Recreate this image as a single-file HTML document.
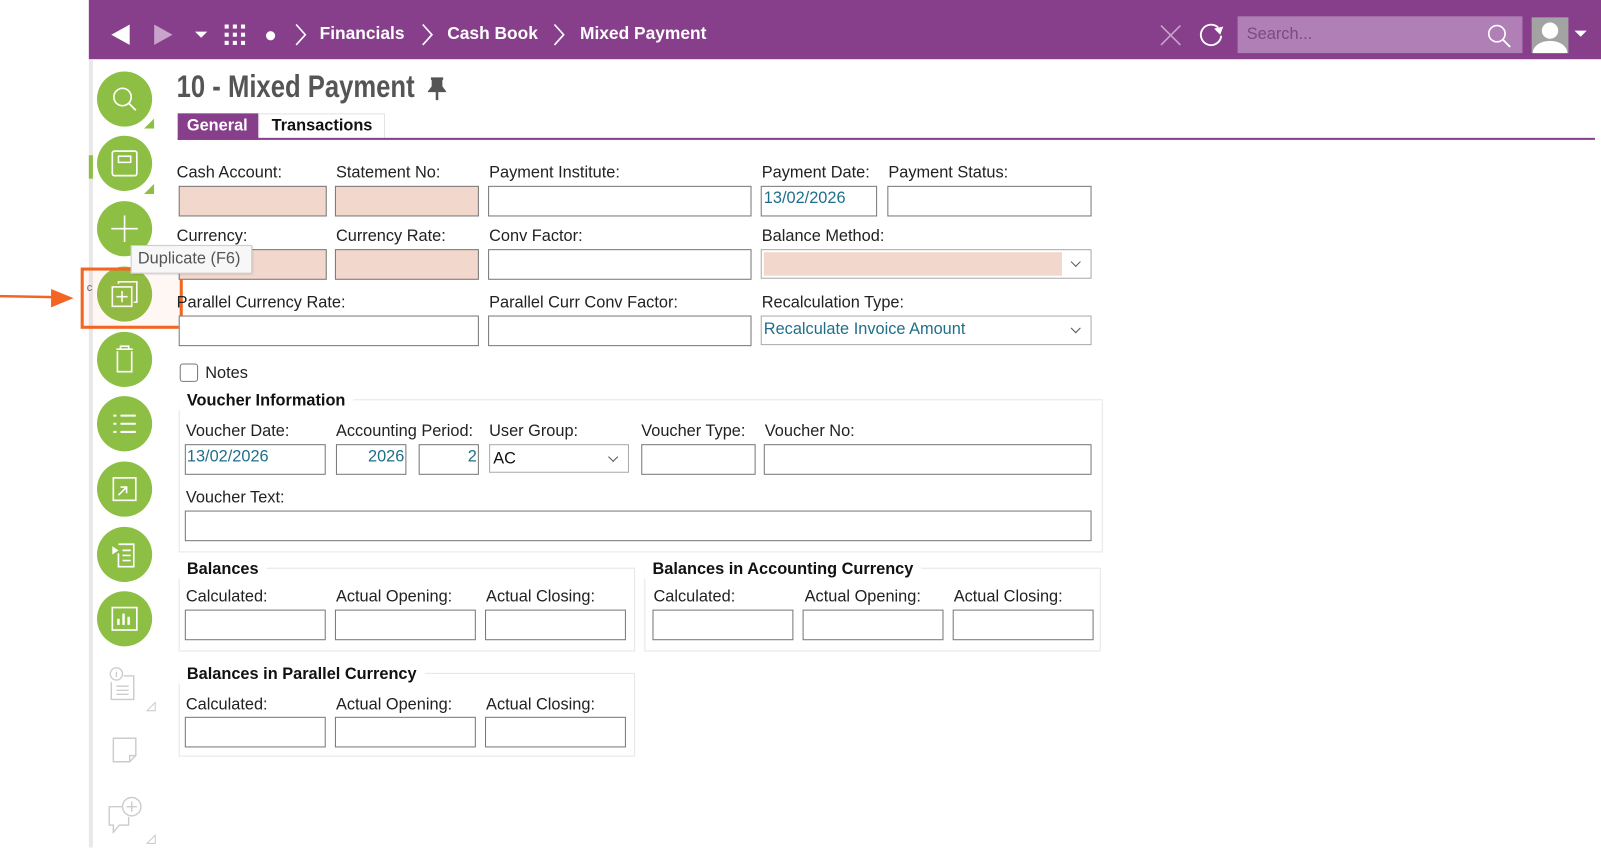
<!DOCTYPE html>
<html><head><meta charset="utf-8"><style>
*{box-sizing:border-box;margin:0;padding:0}
html,body{width:1601px;height:847px;overflow:hidden;background:#fff}
#w{position:absolute;left:0;top:0;width:1568px;height:830px;transform:scale(1.0211);transform-origin:0 0;font-family:"Liberation Sans",Arial,sans-serif;color:#222}
.a{position:absolute}
.hdr{left:87px;top:0;width:1481px;height:58px;background:#873f8c}
.bc{color:#fff;font-weight:bold;font-size:17px;top:23px}
.lbl{position:absolute;font-size:16px;color:#222;white-space:nowrap}
.in{position:absolute;border:1px solid #777;background:#fff;height:30px}
.pk{background:#f2d7cc}
.val{position:absolute;font-size:16px;color:#1f6f8b;top:5px;left:3px}
.sel{position:absolute;border:1px solid #aaa;background:#fff;height:29px}
.sel:after{content:"";position:absolute;right:11px;top:8px;width:6px;height:6px;border-right:1px solid #555;border-bottom:1px solid #555;transform:rotate(45deg)}
.fs{position:absolute;border:1px solid #e6e6e6}
.lg{position:absolute;font-weight:bold;font-size:16px;background:#fff;padding:0 8px 0 8px;color:#111}
.g{position:absolute;left:95px;width:54px;height:54px;border-radius:50%;background:#8dbf44}
.g svg{position:absolute;left:12px;top:12px}
</style></head><body><div id="w">
<div class="a hdr"></div>
<div class="a" style="left:87px;top:58px;width:4px;height:772px;background:#e8e8e8"></div>
<div class="a" style="left:87px;top:152px;width:4px;height:23px;background:#8dbf44"></div>
<svg class="a" style="left:100px;top:20px" width="620" height="30">
<polygon points="9,14 27,4 27,24" fill="#fff"/>
<polygon points="51,4 69,14 51,24" fill="#c9a3cc"/>
<polygon points="91,11 103,11 97,17" fill="#fff"/>
<g fill="#fff"><rect x="120" y="4" width="4" height="4"/><rect x="128" y="4" width="4" height="4"/><rect x="136" y="4" width="4" height="4"/><rect x="120" y="12" width="4" height="4"/><rect x="128" y="12" width="4" height="4"/><rect x="136" y="12" width="4" height="4"/><rect x="120" y="20" width="4" height="4"/><rect x="128" y="20" width="4" height="4"/><rect x="136" y="20" width="4" height="4"/></g>
<circle cx="165" cy="15" r="4.5" fill="#fff"/>
<g stroke="#fff" stroke-width="1.6" fill="none"><polyline points="190,4 199,14 190,24"/><polyline points="314,4 323,14 314,24"/><polyline points="443,4 452,14 443,24"/></g>
</svg>
<div class="a bc" style="left:313px">Financials</div>
<div class="a bc" style="left:438px">Cash Book</div>
<div class="a bc" style="left:568px">Mixed Payment</div>
<svg class="a" style="left:1134px;top:22px" width="26" height="26"><path d="M3,3 L22,22 M22,3 L3,22" stroke="#c9a3cc" stroke-width="1.6"/></svg>
<svg class="a" style="left:1173px;top:21px" width="28" height="28"><path d="M20,6 A10,10 0 1 0 23,14" stroke="#fff" stroke-width="1.8" fill="none"/><polygon points="16,7 25,5 22,13" fill="#fff"/></svg>
<div class="a" style="left:1212px;top:16px;width:279px;height:36px;background:#b07fb5"></div>
<div class="a" style="left:1221px;top:25px;font-size:16px;color:#7c4a80">Search...</div>
<svg class="a" style="left:1455px;top:22px" width="28" height="28"><circle cx="11" cy="11" r="8" stroke="#fff" stroke-width="1.6" fill="none"/><path d="M17,17 L24,24" stroke="#fff" stroke-width="1.8"/></svg>
<div class="a" style="left:1500px;top:17px;width:36px;height:35px;background:#a3a3a3;overflow:hidden"><div class="a" style="left:10px;top:5px;width:16px;height:16px;border-radius:50%;background:#fff"></div><div class="a" style="left:1px;top:23px;width:34px;height:24px;border-radius:50%;background:#fff"></div></div>
<svg class="a" style="left:1541px;top:28px" width="14" height="10"><polygon points="1,2 13,2 7,8" fill="#fff"/></svg>

<!-- left toolbar -->
<div class="g" style="top:70px"><svg width="30" height="30"><circle cx="13" cy="13" r="8.5" stroke="#fff" stroke-width="1.6" fill="none"/><path d="M19,19 L26,26" stroke="#fff" stroke-width="1.8"/></svg></div>
<div class="g" style="top:133px"><svg width="30" height="30"><rect x="3" y="3" width="24" height="24" rx="2" stroke="#fff" stroke-width="1.6" fill="none"/><rect x="9" y="8" width="12" height="6" stroke="#fff" stroke-width="1.5" fill="none"/></svg></div>
<div class="g" style="top:197px"><svg width="30" height="30"><path d="M15,2 V28 M2,15 H28" stroke="#fff" stroke-width="1.6"/></svg></div>
<div class="g" style="top:261px"><svg width="30" height="30"><path d="M9,5 V3 H27 V23 H24" stroke="#fff" stroke-width="1.6" fill="none"/><rect x="3" y="8" width="19" height="19" stroke="#fff" stroke-width="1.6" fill="none"/><path d="M12.5,12 V23 M7,17.5 H18" stroke="#fff" stroke-width="1.6"/></svg></div>
<div class="g" style="top:325px"><svg width="30" height="30"><path d="M7,5 H23 M11,5 V2 H19 V5 M8,7 V27 H22 V7" stroke="#fff" stroke-width="1.6" fill="none"/></svg></div>
<div class="g" style="top:388px"><svg width="30" height="30"><g stroke="#fff" stroke-width="2"><path d="M4,7 H7 M11,7 H26 M4,15 H7 M11,15 H26 M4,23 H7 M11,23 H26"/></g></svg></div>
<div class="g" style="top:452px"><svg width="30" height="30"><rect x="4" y="4" width="22" height="22" stroke="#fff" stroke-width="1.6" fill="none"/><path d="M9,21 L17,13 M11,13 H17 V19" stroke="#fff" stroke-width="1.6" fill="none"/></svg></div>
<div class="g" style="top:516px"><svg width="30" height="30"><path d="M9,5 H24 V27 H9 V14" stroke="#fff" stroke-width="1.6" fill="none"/><path d="M13,11 H21 M13,16 H21 M13,21 H21" stroke="#fff" stroke-width="1.6"/><polygon points="3,7 9,11 3,15" fill="#fff"/></svg></div>
<div class="g" style="top:579px"><svg width="30" height="30"><rect x="3" y="4" width="24" height="22" stroke="#fff" stroke-width="1.6" fill="none"/><path d="M9,21 V15 M14,21 V10 M19,21 V13" stroke="#fff" stroke-width="2.4"/></svg></div>
<svg class="a" style="left:141px;top:116px" width="10" height="10"><polygon points="10,0 10,10 0,10" fill="#8dbf44"/></svg>
<svg class="a" style="left:141px;top:180px" width="10" height="10"><polygon points="10,0 10,10 0,10" fill="#8dbf44"/></svg>
<svg class="a" style="left:104px;top:650px" width="50" height="50"><circle cx="10" cy="10" r="6" stroke="#ccc" stroke-width="1.3" fill="none"/><path d="M10,8 V13 M10,6 V6.5" stroke="#ccc" stroke-width="1.3"/><path d="M17,12 H27 V35 H5 V18" stroke="#ccc" stroke-width="1.4" fill="none"/><path d="M10,22 H22 M10,26 H22 M10,30 H22" stroke="#ccc" stroke-width="1.3"/><polygon points="48,38 48,46 40,46" fill="none" stroke="#ccc"/></svg>
<svg class="a" style="left:108px;top:720px" width="30" height="30"><path d="M3,3 H25 V20 L19,26 H3 Z M19,26 V20 H25" stroke="#ccc" stroke-width="1.4" fill="none"/></svg>
<svg class="a" style="left:104px;top:778px" width="50" height="52"><circle cx="25" cy="12" r="9" stroke="#ccc" stroke-width="1.4" fill="none"/><path d="M25,7 V17 M20,12 H30" stroke="#ccc" stroke-width="1.4"/><path d="M16,12 H3 V30 H7 V37 L13,30 H22 V22" stroke="#ccc" stroke-width="1.4" fill="none"/><polygon points="48,40 48,48 40,48" fill="none" stroke="#ccc"/></svg>

<!-- highlight + arrow -->
<div class="a" style="left:79px;top:262px;width:100px;height:60px;border:3px solid #f26522;background:rgba(242,101,34,0.05)"></div>
<div class="a" style="left:85px;top:276px;font-size:11px;color:#666">c</div>
<svg class="a" style="left:0;top:280px" width="76" height="22"><path d="M0,10 L52,11" stroke="#f26522" stroke-width="2.5"/><polygon points="50,3 72,12 50,21" fill="#f26522"/></svg>

<!-- title -->
<div class="a" style="left:173px;top:67px;font-weight:bold;font-size:31px;color:#555;white-space:nowrap;transform:scaleX(0.81);transform-origin:0 0">10 - Mixed Payment</div>
<svg class="a" style="left:419px;top:75px" width="18" height="24"><path d="M3,2 H15 M5,2 V10 L2,14 H16 L13,10 V2 M9,14 V23" stroke="#555" stroke-width="2.5" fill="#555"/></svg>
<div class="a" style="left:174px;top:111px;width:79px;height:26px;background:#873f8c;color:#fff;font-weight:bold;font-size:16px;padding:4px 0 0 9px">General</div>
<div class="a" style="left:253px;top:111px;width:124px;height:26px;border:1px solid #e3e3e3;border-bottom:none;font-weight:bold;font-size:16px;padding:3px 0 0 12px;color:#111">Transactions</div>
<div class="a" style="left:174px;top:135px;width:1388px;height:2px;background:#873f8c"></div>

<!-- row1 -->
<div class="lbl" style="left:173px;top:161px">Cash Account:</div>
<div class="lbl" style="left:329px;top:161px">Statement No:</div>
<div class="lbl" style="left:479px;top:161px">Payment Institute:</div>
<div class="lbl" style="left:746px;top:161px">Payment Date:</div>
<div class="lbl" style="left:870px;top:161px">Payment Status:</div>
<div class="in pk" style="left:175px;top:182px;width:145px"></div>
<div class="in pk" style="left:328px;top:182px;width:141px"></div>
<div class="in" style="left:478px;top:182px;width:258px"></div>
<div class="in" style="left:745px;top:182px;width:114px"><span class="val" style="top:3px;left:2px">13/02/2026</span></div>
<div class="in" style="left:869px;top:182px;width:200px"></div>
<!-- row2 -->
<div class="lbl" style="left:173px;top:223px">Currency:</div>
<div class="lbl" style="left:329px;top:223px">Currency Rate:</div>
<div class="lbl" style="left:479px;top:223px">Conv Factor:</div>
<div class="lbl" style="left:746px;top:223px">Balance Method:</div>
<div class="in pk" style="left:175px;top:244px;width:145px"></div>
<div class="in pk" style="left:328px;top:244px;width:141px"></div>
<div class="in" style="left:478px;top:244px;width:258px"></div>
<div class="sel" style="left:745px;top:244px;width:324px"><div class="a" style="left:2px;top:2px;width:292px;height:23px;background:#f2d7cc"></div></div>
<!-- row3 -->
<div class="lbl" style="left:173px;top:288px">Parallel Currency Rate:</div>
<div class="lbl" style="left:479px;top:288px">Parallel Curr Conv Factor:</div>
<div class="lbl" style="left:746px;top:288px">Recalculation Type:</div>
<div class="in" style="left:175px;top:309px;width:294px"></div>
<div class="in" style="left:478px;top:309px;width:258px"></div>
<div class="sel" style="left:745px;top:309px;width:324px"><span class="val" style="top:4px;left:2px">Recalculate Invoice Amount</span></div>
<!-- tooltip -->
<div class="a" style="left:128px;top:240px;width:119px;height:28px;background:#f7f7f7;border:1px solid #ccc;box-shadow:1px 1px 2px rgba(0,0,0,.2);font-size:16px;color:#555;padding:4px 0 0 6px">Duplicate (F6)</div>

<!-- notes -->
<div class="a" style="left:176px;top:356px;width:18px;height:18px;border:1px solid #777;border-radius:3px;background:#fff"></div>
<div class="lbl" style="left:201px;top:357px">Notes</div>

<!-- voucher info -->
<div class="fs" style="left:175px;top:391px;width:905px;height:150px"></div>
<div class="lg" style="left:175px;top:384px">Voucher Information</div>
<div class="lbl" style="left:182px;top:414px">Voucher Date:</div>
<div class="lbl" style="left:329px;top:414px">Accounting Period:</div>
<div class="lbl" style="left:479px;top:414px">User Group:</div>
<div class="lbl" style="left:628px;top:414px">Voucher Type:</div>
<div class="lbl" style="left:749px;top:414px">Voucher No:</div>
<div class="in" style="left:181px;top:435px;width:138px"><span class="val" style="top:3px;left:1px">13/02/2026</span></div>
<div class="in" style="left:329px;top:435px;width:69px"><span class="val" style="top:3px;left:auto;right:1px">2026</span></div>
<div class="in" style="left:410px;top:435px;width:59px"><span class="val" style="top:3px;left:auto;right:1px">2</span></div>
<div class="sel" style="left:479px;top:435px;width:137px;height:28px"><span class="a" style="left:3px;top:5px;font-size:16px;color:#111">AC</span></div>
<div class="in" style="left:628px;top:435px;width:112px"></div>
<div class="in" style="left:748px;top:435px;width:321px"></div>
<div class="lbl" style="left:182px;top:479px">Voucher Text:</div>
<div class="in" style="left:181px;top:500px;width:888px"></div>

<!-- balances -->
<div class="fs" style="left:175px;top:556px;width:447px;height:82px"></div>
<div class="lg" style="left:175px;top:549px">Balances</div>
<div class="lbl" style="left:182px;top:576px">Calculated:</div>
<div class="lbl" style="left:329px;top:576px">Actual Opening:</div>
<div class="lbl" style="left:476px;top:576px">Actual Closing:</div>
<div class="in" style="left:181px;top:597px;width:138px"></div>
<div class="in" style="left:328px;top:597px;width:138px"></div>
<div class="in" style="left:475px;top:597px;width:138px"></div>

<div class="fs" style="left:631px;top:556px;width:447px;height:82px"></div>
<div class="lg" style="left:631px;top:549px">Balances in Accounting Currency</div>
<div class="lbl" style="left:640px;top:576px">Calculated:</div>
<div class="lbl" style="left:788px;top:576px">Actual Opening:</div>
<div class="lbl" style="left:934px;top:576px">Actual Closing:</div>
<div class="in" style="left:639px;top:597px;width:138px"></div>
<div class="in" style="left:786px;top:597px;width:138px"></div>
<div class="in" style="left:933px;top:597px;width:138px"></div>

<div class="fs" style="left:175px;top:659px;width:447px;height:82px"></div>
<div class="lg" style="left:175px;top:652px">Balances in Parallel Currency</div>
<div class="lbl" style="left:182px;top:682px">Calculated:</div>
<div class="lbl" style="left:329px;top:682px">Actual Opening:</div>
<div class="lbl" style="left:476px;top:682px">Actual Closing:</div>
<div class="in" style="left:181px;top:702px;width:138px"></div>
<div class="in" style="left:328px;top:702px;width:138px"></div>
<div class="in" style="left:475px;top:702px;width:138px"></div>
</div></body></html>
